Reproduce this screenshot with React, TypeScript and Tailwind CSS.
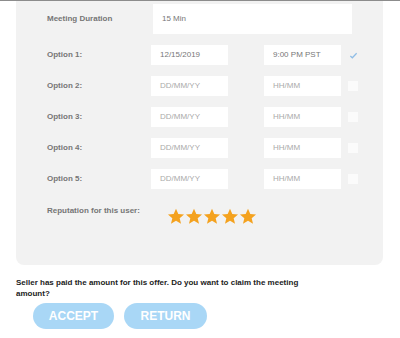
import React from "react";

const options = [
  { label: "Option 1:", date: "12/15/2019", time: "9:00 PM PST", checked: true },
  { label: "Option 2:", date: "", time: "", checked: false },
  { label: "Option 3:", date: "", time: "", checked: false },
  { label: "Option 4:", date: "", time: "", checked: false },
  { label: "Option 5:", date: "", time: "", checked: false },
];

function Star() {
  return (
    <svg viewBox="0 0 24 24" className="h-[19px] w-[18px]" fill="#f4a21f">
      <path d="M12 1.5l3.1 7.1 7.6.6-5.8 5 1.8 7.5L12 17.7l-6.7 4 1.8-7.5-5.8-5 7.6-.6z" />
    </svg>
  );
}

function Field({ value, placeholder, className }: { value: string; placeholder: string; className: string }) {
  return (
    <div className={`flex items-center bg-white px-[9px] text-[8px] ${className}`}>
      {value ? (
        <span className="text-[#777]">{value}</span>
      ) : (
        <span className="text-[#aaa]">{placeholder}</span>
      )}
    </div>
  );
}

export default function App() {
  return (
    <div className="h-[338px] w-[400px] bg-white font-['Liberation_Sans',Arial,sans-serif]">
      <div className="h-px bg-[#8c8c8c]" />
      <div className="mx-[16px] w-[367px] rounded-b-lg bg-[#f2f2f2] pb-[39px] pl-[31px] pt-[3px]">
        <div className="flex items-center">
          <div className="w-[106px] text-[8px] font-bold text-[#767676]">Meeting Duration</div>
          <Field value="15 Min" placeholder="" className="h-[30px] w-[199px] px-[7px]" />
        </div>

        <div className="mt-[11px] flex flex-col gap-[11px]">
          {options.map((o) => (
            <div key={o.label} className="flex items-center">
              <div className="w-[104px] text-[8px] font-bold text-[#767676]">{o.label}</div>
              <Field value={o.date} placeholder="DD/MM/YY" className="h-[20px] w-[77px]" />
              <Field value={o.time} placeholder="HH/MM" className="ml-[36px] h-[20px] w-[77px]" />
              <div className="ml-[7px] flex h-[10px] w-[10px] items-center justify-center">
                {o.checked ? (
                  <svg viewBox="0 0 10 10" className="h-[9px] w-[9px]" fill="none" stroke="#8fbde6" strokeWidth={1.4}>
                    <path d="M1.5 5.5l2.2 2L8.5 2.5" />
                  </svg>
                ) : (
                  <div className="h-[10px] w-[10px] bg-[#fbfbfb]" />
                )}
              </div>
            </div>
          ))}
        </div>

        <div className="mt-[16px] flex items-start">
          <div className="w-[120px] text-[8px] font-bold text-[#767676]">Reputation for this user:</div>
          <div className="mt-[2px] flex">
            {[0, 1, 2, 3, 4].map((i) => (
              <Star key={i} />
            ))}
          </div>
        </div>
      </div>

      <p className="ml-[16px] mt-[12px] w-[300px] text-[8px] font-bold leading-[11px] text-[#222]">
        Seller has paid the amount for this offer. Do you want to claim the meeting amount?
      </p>

      <div className="ml-[33px] mt-[4px] flex gap-[10px]">
        <button className="h-[26px] w-[81px] rounded-[13px] bg-[#a9d7f6] text-[12px] font-semibold text-white">
          ACCEPT
        </button>
        <button className="h-[26px] w-[83px] rounded-[13px] bg-[#a9d7f6] text-[12px] font-semibold text-white">
          RETURN
        </button>
      </div>
    </div>
  );
}
